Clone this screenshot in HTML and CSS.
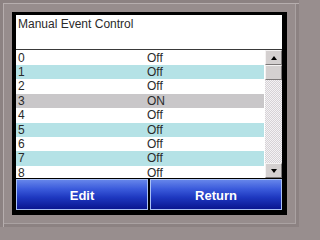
FILE: index.html
```html
<!DOCTYPE html>
<html>
<head>
<meta charset="utf-8">
<link rel="stylesheet" href="styles.css">
</head>
<body>
<div class="screen">
  <div class="panel">
    <div class="title">Manual Event Control</div>
    <div class="listwrap">
      <div class="list">
        <div class="row"><span>0</span><span>Off</span></div>
        <div class="row alt"><span>1</span><span>Off</span></div>
        <div class="row"><span>2</span><span>Off</span></div>
        <div class="row sel"><span>3</span><span>ON</span></div>
        <div class="row"><span>4</span><span>Off</span></div>
        <div class="row alt"><span>5</span><span>Off</span></div>
        <div class="row"><span>6</span><span>Off</span></div>
        <div class="row alt"><span>7</span><span>Off</span></div>
        <div class="row"><span>8</span><span>Off</span></div>
      </div>
      <div class="scrollbar">
        <div class="sbtn"><span class="tri up"></span></div>
        <div class="thumb"></div>
        <div class="track"></div>
        <div class="sbtn"><span class="tri down"></span></div>
      </div>
    </div>
    <div class="buttons">
      <div class="btn">Edit</div>
      <div class="btn">Return</div>
    </div>
  </div>
</div>
</body>
</html>
```
FILE: styles.css
```css
html, body {
  margin: 0;
  padding: 0;
  background: #988e8e;
}
.screen {
  width: 299px;
  height: 227px;
  box-sizing: border-box;
  padding: 12px;
  background: #978d8d;
  box-shadow: inset 3px 3px 0 #8c8282, inset 4px 4px 0 #b6aeae, inset -3px -3px 0 #8c8282, inset -4px -4px 0 #aaa2a2;
  font-family: "Liberation Sans", Arial, sans-serif;
}
.panel {
  width: 275px;
  height: 203px;
  box-sizing: border-box;
  background: #000;
  padding: 3px 5px 5px 4px;
  display: flex;
  flex-direction: column;
}
.title {
  height: 34px;
  background: #fff;
  border-bottom: 1px solid #3a3a3a;
  color: #2a2a2a;
  font-size: 12px;
  line-height: 14px;
  padding: 2px 0 0 2px;
  box-sizing: content-box;
  height: 32px;
}
.listwrap {
  height: 128px;
  display: flex;
  background: #fff;
}
.list {
  flex: 1;
  overflow: hidden;
  padding-top: 0.6px;
  padding-right: 1px;
  background: #fff;
}
.row {
  height: 14.4px;
  display: grid;
  grid-template-columns: 129px 1fr;
  padding-left: 2px;
  font-size: 12px;
  line-height: 14.4px;
  color: #2a2a2a;
}
.row.alt { background: #b5e2e6; }
.row.sel { background: #c9c7c9; }
.scrollbar {
  width: 17px;
  display: flex;
  flex-direction: column;
}
.sbtn, .thumb {
  height: 15px;
  box-sizing: border-box;
  background: #d4d0d0;
  border-top: 1px solid #f4f2f2;
  border-left: 1px solid #f4f2f2;
  border-right: 1px solid #7c7878;
  border-bottom: 1px solid #7c7878;
  display: flex;
  align-items: center;
  justify-content: center;
}
.track {
  flex: 1;
  background: repeating-conic-gradient(#f4f2f4 0 25%, #d6d2d6 0 50%) 0 0 / 2px 2px;
}
.tri {
  width: 0;
  height: 0;
  border-left: 3.5px solid transparent;
  border-right: 3.5px solid transparent;
}
.tri.up { border-bottom: 4px solid #000; }
.tri.down { border-top: 4px solid #000; }
.buttons {
  margin-top: 1px;
  height: 31px;
  display: grid;
  grid-template-columns: 1fr 1fr;
  gap: 2px;
}
.btn {
  box-sizing: border-box;
  border: 1px solid #a9c0f4;
  background: linear-gradient(#6585ea 0%, #3c5cdc 30%, #1e38c0 60%, #0a1690 100%);
  color: #fff;
  font-weight: bold;
  font-size: 13px;
  display: flex;
  align-items: center;
  justify-content: center;
  padding-top: 1px;
}
```
